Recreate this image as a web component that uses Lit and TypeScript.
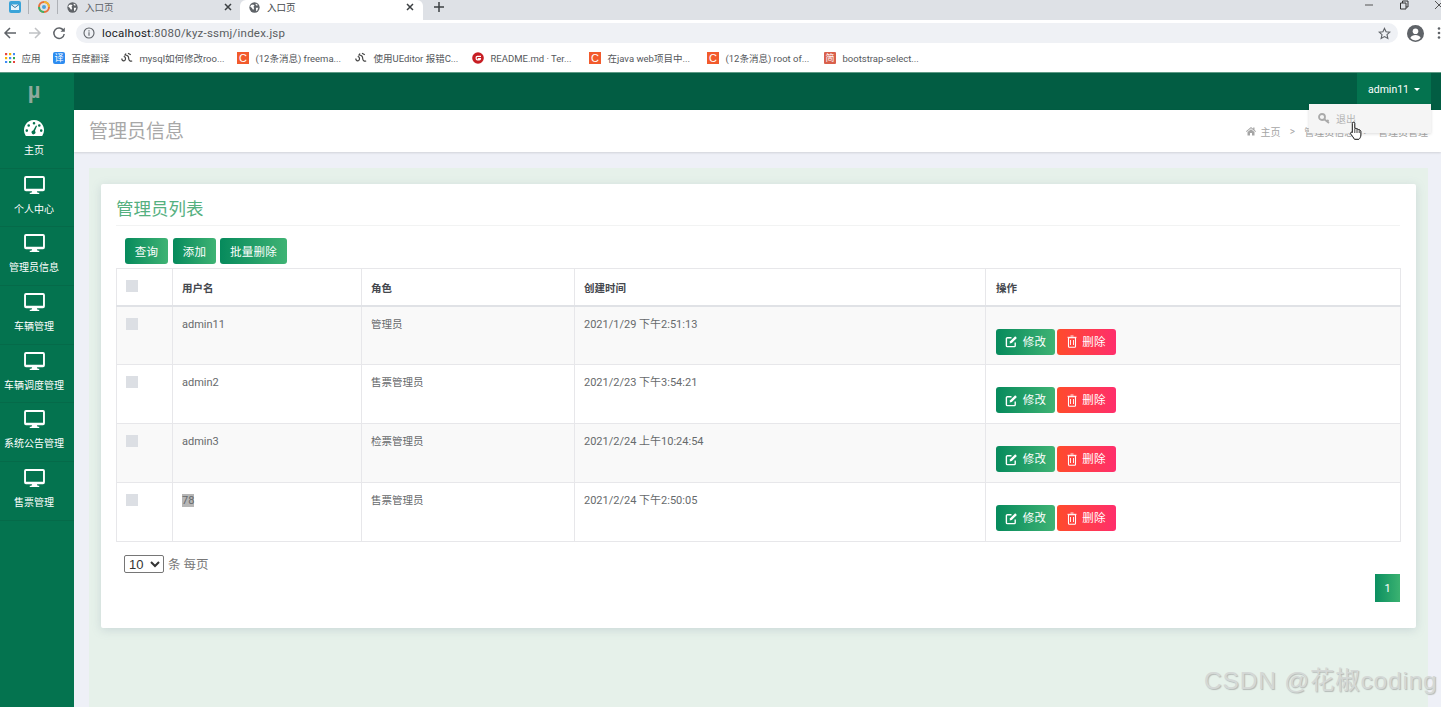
import { LitElement, html, css, svg } from "lit";
import { customElement } from "lit/decorators.js";

const globe = html`<svg class="tabicon" viewBox="0 0 16 16"><circle cx="8" cy="8" r="7.500" fill="#5f6368"/><path d="M3 4.500 6 3.500 8 5 6.500 7 7.500 9 6 11.500 4 8.500 1.800 7ZM10 2l3 2.500-1.500 1L9.500 4ZM10 8.500h3.500L12 12.500 10.500 13.500Z" fill="#fff"/></svg>`;
const closeX = html`<svg class="tabclose" viewBox="0 0 10 10"><path d="M2 2l6 6M8 2l-6 6" stroke="#3c4043" stroke-width="1.500"/></svg>`;
const monitor = html`<svg class="navicon" width="21" height="18" viewBox="0 0 22 19"><path fill="#fff" fill-rule="evenodd" d="M2 0h18a2 2 0 0 1 2 2v12a2 2 0 0 1-2 2h-6.500l.8 1.600H16V19H6v-1.400h1.700l.8-1.600H2a2 2 0 0 1-2-2V2a2 2 0 0 1 2-2Zm0 2v11.400h18V2Z"/></svg>`;
const gauge = html`<svg class="navicon g" width="20" height="16" viewBox="0 0 20 16"><path fill="#fff" fill-rule="evenodd" d="M10 0a10 10 0 0 1 8.800 14.800l-.6 1.200H1.800l-.6-1.200A10 10 0 0 1 10 0ZM10 2a1.300 1.300 0 1 0 0 2.600A1.300 1.300 0 0 0 10 2ZM4.700 4.200a1.300 1.300 0 1 0 0 2.600 1.300 1.300 0 0 0 0-2.600ZM15.300 4.200a1.300 1.300 0 1 0 0 2.600 1.300 1.300 0 0 0 0-2.600ZM2.800 9.300a1.300 1.300 0 1 0 0 2.600 1.300 1.300 0 0 0 0-2.600ZM17.200 9.300a1.300 1.300 0 1 0 0 2.600 1.300 1.300 0 0 0 0-2.600ZM12 5.500 9.200 10.500a1.900 1.900 0 1 0 1.700.6L13 5.900Z"/></svg>`;
const edit = html`<svg width="13" height="13" viewBox="0 0 14 14"><path d="M11 8v3.500a1 1 0 0 1-1 1H2.500a1 1 0 0 1-1-1V4a1 1 0 0 1 1-1H7" fill="none" stroke="#fff" stroke-width="1.500"/><path d="M5.500 6.800 11 1.300l1.800 1.800-5.500 5.500-2.300.5Z" fill="#fff"/></svg>`;
const trash = html`<svg width="10" height="13" viewBox="0 0 10 13"><path d="M1.500 2.800h7v8.700a.8.8 0 0 1-.8.800H2.300a.8.8 0 0 1-.8-.8Z" fill="none" stroke="#fff" stroke-width="1.100"/><path d="M.5 2.300h9M3.500 1h3M3.500 5v5M6.500 5v5" stroke="#fff" stroke-width=".9"/></svg>`;
const cIcon = html`<span class="bi ci">C</span>`;
const swirl = html`<svg class="bi" viewBox="0 0 12 12"><path d="M.8 6.500c0 3 3.700 3 3.700.3 0-1.800-1-2.300-1.800-2M5 1.500 4 3c2 0 3.700 1 3.700 3.500 0 2 1.500 3 3.500 2.500M7 1.200l2.800 1.600" fill="none" stroke="#444" stroke-width="1.200"/></svg>`;

const bookmarks = [
  { icon: html`<svg class="bi apps" viewBox="0 0 10 10">${[0, 4, 8].flatMap((y, r) => [0, 4, 8].map((x, c) => svg`<rect x=${x} y=${y} width="2.200" height="2.200" fill=${["#e8453c", "#f4b400", "#3d8af7", "#34a853"][(r + c) % 4]} />`))}</svg>`, text: "应用" },
  { icon: html`<span class="bi yi">译</span>`, text: "百度翻译" },
  { icon: swirl, text: "mysql如何修改roo..." },
  { icon: cIcon, text: "(12条消息) freema..." },
  { icon: swirl, text: "使用UEditor 报错C..." },
  { icon: html`<svg class="bi" viewBox="0 0 12 12"><circle cx="6" cy="6" r="5.800" fill="#c71d23"/><path d="M9 4.300H5.300a1.100 1.100 0 0 0-1.100 1.100v1.400a1.100 1.100 0 0 0 1.100 1.100h1.900a1.300 1.300 0 0 0 1.300-1.300H5.800" fill="none" stroke="#fff" stroke-width="1.200"/></svg>`, text: "README.md · Ter..." },
  { icon: cIcon, text: "在java web项目中..." },
  { icon: cIcon, text: "(12条消息) root of..." },
  { icon: html`<span class="bi jian">简</span>`, text: "bootstrap-select..." },
];

const nav = ["主页", "个人中心", "管理员信息", "车辆管理", "车辆调度管理", "系统公告管理", "售票管理"];
const rows = [
  ["admin11", "管理员", "2021/1/29 下午2:51:13"],
  ["admin2", "售票管理员", "2021/2/23 下午3:54:21"],
  ["admin3", "检票管理员", "2021/2/24 上午10:24:54"],
  ["78", "售票管理员", "2021/2/24 下午2:50:05"],
];

@customElement("app-root")
export class AppRoot extends LitElement {
  static styles = css`
    :host { display: block; width: 1441px; height: 707px; overflow: hidden; position: relative; background: #eef0f7;
      font-family: Roboto, "Noto Sans CJK SC", sans-serif; font-size: 11px; color: #676a6c; }
    * { box-sizing: border-box; }

    .tabs { height: 20px; background: #dee1e6; display: flex; align-items: flex-start; }
    .pin { width: 29px; height: 14px; display: flex; align-items: center; justify-content: center; position: relative; }
    .pin::after { content: ""; position: absolute; right: 0; top: 0; bottom: 0; width: 1px; background: #aeb1b6; }
    .tab { width: 181px; height: 20px; display: flex; align-items: center; padding: 0 6px 6px 9px; gap: 7px; color: #5f6368; font-size: 9.500px; margin-right: 1px; }
    .tab span { flex: 1; }
    .tab.active { background: #fff; border-radius: 6px 6px 0 0; color: #45484c; width: 183px; padding-right: 8px; }
    .tabicon { width: 11px; height: 11px; flex: none; }
    .tabclose { width: 10px; height: 10px; flex: none; }
    .plus { margin: 1px 0 0 9px; width: 12px; height: 12px; }
    .winctl { margin-left: auto; display: flex; align-items: center; height: 10px; gap: 25px; margin-right: -3px; }

    .toolbar { height: 24px; background: #fff; display: flex; align-items: center; padding: 2px 0 0 3px; }
    .toolbar .nb { flex: none; width: 24.500px; height: 14px; display: flex; }
    .toolbar .nb.r { width: 17px; }
    .pill { margin-left: 7px; width: 1322px; height: 20px; border-radius: 10px; background: #eff1f5; display: flex; align-items: center; padding: 0 7px; color: #5a5d61; font-size: 11.500px; gap: 7px; }
    .pill .url { flex: 1; letter-spacing: .02em; }
    .pill .url b { font-weight: 400; color: #202124; }
    .tools { display: flex; align-items: center; margin-left: 9px; gap: 13px; }

    .bm { height: 28px; background: #fff; display: grid; grid-template-columns: 48px 68px 116px 118px 117px 117px 118px 117px 120px; padding-left: 5px; align-items: center; font-size: 9.500px; color: #55585c; white-space: nowrap; }
    .bm > div { display: flex; align-items: center; gap: 6.500px; }
    .bi { width: 12px; height: 12px; flex: none; display: block; }
    .apps { width: 10px; height: 10px; }
    .ci { background: #f25a2c; color: #fff; font: 11px/12px "Liberation Sans", sans-serif; text-align: center; }
    .yi { background: #2d8cf0; color: #fff; border-radius: 2px; font-size: 9px; line-height: 12px; text-align: center; }
    .jian { background: #d9604c; color: #fff; border-radius: 1px; font-size: 9px; line-height: 12px; text-align: center; }

    .app { height: 635px; display: grid; grid-template-columns: 74px 1fr; grid-template-rows: 38px 1fr; }
    .logo { background: #04734f; border-top: 1px solid #5e9a85; color: #8fa99c; font: bold 22px/35px "Liberation Sans", sans-serif; text-align: center; padding-right: 6px; }
    .top { background: #025d43; border-top: 1px solid #5e9a85; display: flex; justify-content: flex-end; padding-right: 10px; }
    .user { width: 74px; background: #04734f; color: #fff; font-size: 10.500px; display: flex; align-items: center; justify-content: center; gap: 5px; padding-bottom: 4px; }
    .caret { width: 0; height: 0; border: 3px solid transparent; border-top-color: #fff; border-bottom: 0; }

    .side { background: #04734f; }
    .nav { height: 58.670px; border-bottom: 1px solid #056a49; display: flex; flex-direction: column; align-items: center; padding: 7px 6px 0 0; color: #fff; font-size: 10px; line-height: 14px; gap: 9px; white-space: nowrap; }
    .navicon { flex: none; }
    .navicon.g { margin: 3px 0 -1px; }

    .main { display: flex; flex-direction: column; min-width: 0; }
    .head { height: 42px; background: #fff; box-shadow: 0 1px 2px rgba(0,0,0,.12); display: flex; align-items: center; justify-content: space-between; padding: 0 13px 4px 15px; }
    .head h1 { margin: 0; font-size: 19px; font-weight: 400; color: #a8a8a8; }
    .crumb { display: flex; align-items: center; gap: 9.250px; color: #a5a5a5; font-size: 10px; padding-top: 4px; }
    .crumb .home { display: flex; align-items: center; gap: 5px; }
    .wrap { margin: 16px 13px 0 15px; padding: 16px 12px; background: #e6f1ea; flex: 1; }
    .card { background: #fff; height: 444px; padding: 15px 16px 0 15px; box-shadow: 0 2px 10px rgba(130,150,170,.28); border-radius: 2px; }
    .card h2 { margin: 0; height: 27px; font-size: 17.500px; font-weight: 400; line-height: 20px; color: #55b07f; border-bottom: 1px solid #f2f3f3; }
    .bar { display: flex; gap: 5px; padding: 12px 0 4px 9px; }
    .btn { border: 0; height: 26px; border-radius: 3px; color: #fff; font: inherit; font-size: 11.500px; padding: 0; display: inline-flex; align-items: center; justify-content: center; gap: 5px; background: linear-gradient(90deg, #068a5c, #3fb374); letter-spacing: .3px; }
    .bar .btn { width: 43px; }
    .bar .btn.wide { width: 67px; margin-left: -1px; }
    .btn.danger { background: linear-gradient(90deg, #ff4b2b, #ff2e6c); }

    table { border-collapse: collapse; table-layout: fixed; width: 1284px; }
    th, td { border: 1px solid #e7e7ea; padding: 0 9px; vertical-align: top; text-align: left; line-height: 14px; }
    th { height: 37px; color: #45484e; font-size: 10.500px; font-weight: 700; padding-top: 13px; border-bottom: 2px solid #e0e2e6; }
    td { height: 59px; padding-top: 11px; font-size: 10.500px; }
    td.name { font-size: 11px; }
    th:last-child, td:last-child { padding-left: 10px; }
    tbody tr:nth-child(odd) { background: #f9f9f9; }
    .chk { display: block; width: 12px; height: 12px; background: #dcdfe4; }
    th .chk { margin-top: -2px; }
    td .chk { margin-top: 0; }
    .ops { display: flex; gap: 2px; margin-top: 11px; }
    .ops .btn { width: 59px; }
    .sel { background: #b6b6b6; }

    .foot { display: flex; align-items: center; padding: 12px 0 0 8px; gap: 4px; font-size: 12.500px; color: #777; }
    select { width: 40px; height: 18px; font: 13px "Liberation Sans", sans-serif; color: #333; background: #fff; border: 1px solid #767676; border-radius: 2px; padding: 0; }
    .pager { display: flex; justify-content: flex-end; margin-top: 1px; }
    .page { width: 25px; height: 28px; color: #fff; font-size: 11px; display: flex; align-items: center; justify-content: center; background: linear-gradient(90deg, #0b8f60, #3bb271); }

    .drop { position: absolute; left: 1309px; top: 104px; width: 122px; height: 29px; background: #f5f5f5; box-shadow: 0 1px 3px rgba(0,0,0,.14); display: flex; align-items: center; padding-left: 9px; gap: 5px; color: #b3b3b3; font-size: 10px; }
    .hand { position: absolute; left: 1349px; top: 121px; }
    .mark { position: absolute; left: 1204px; top: 663px; font: 24.500px/36px "Liberation Sans", "Noto Sans CJK SC", sans-serif; letter-spacing: .8px; color: #d4d8d6; text-shadow: 1px 1px 1px #b5bab7; white-space: nowrap; }
  `;

  render() {
    return html`
      <div class="tabs">
        <div class="pin"><svg width="12" height="12" viewBox="0 0 12 12"><rect width="12" height="12" rx="2" fill="#3aa3d8"/><path d="M2 3.500h8v5.500H2Z" fill="#e8f4fa"/><path d="M2 3.500 6 6.500l4-3" fill="none" stroke="#3478a8" stroke-width="1"/></svg></div>
        <div class="pin"><svg width="12" height="12" viewBox="0 0 12 12"><circle cx="6" cy="6" r="5" fill="none" stroke="#e8703a" stroke-width="2"/><path d="M6 1a5 5 0 0 1 5 5" fill="none" stroke="#f2b632" stroke-width="2"/><path d="M1 6a5 5 0 0 0 5 5" fill="none" stroke="#3bb36a" stroke-width="2"/><circle cx="6" cy="6" r="2" fill="#4aa3df"/></svg></div>
        <div class="tab">${globe}<span>入口页</span>${closeX}</div>
        <div class="tab active">${globe}<span>入口页</span>${closeX}</div>
        <svg class="plus" viewBox="0 0 12 12"><path d="M6 1v10M1 6h10" stroke="#3c4043" stroke-width="1.500"/></svg>
        <div class="winctl">
          <svg width="10" height="10" viewBox="0 0 10 10"><path d="M1 5h8" stroke="#555" stroke-width="1"/></svg>
          <svg width="10" height="10" viewBox="0 0 10 10"><path d="M1.500 3h5.500v6H1.500ZM3.500 3V1h5.500v6H7" fill="none" stroke="#333" stroke-width="1"/></svg>
          <svg width="10" height="10" viewBox="0 0 10 10"><path d="M1 1l8 8M9 1l-8 8" stroke="#555" stroke-width="1"/></svg>
        </div>
      </div>
      <div class="toolbar">
        <div class="nb"><svg width="14" height="14" viewBox="0 0 14 14"><path d="M13 7H2M7 2 2 7l5 5" fill="none" stroke="#5f6368" stroke-width="1.500"/></svg></div>
        <div class="nb"><svg width="14" height="14" viewBox="0 0 14 14"><path d="M1 7h11M7 2l5 5-5 5" fill="none" stroke="#c0c2c5" stroke-width="1.500"/></svg></div>
        <div class="nb r"><svg width="14" height="14" viewBox="0 0 14 14"><path d="M11.500 4.500A5.200 5.200 0 1 0 12.200 8" fill="none" stroke="#5f6368" stroke-width="1.500"/><path d="M12.800 1.500v4.300H8.500Z" fill="#5f6368"/></svg></div>
        <div class="pill">
          <svg width="12" height="12" viewBox="0 0 12 12"><circle cx="6" cy="6" r="5" fill="none" stroke="#5f6368" stroke-width="1.100"/><path d="M6 5.300v3.400M6 3.200v1.200" stroke="#5f6368" stroke-width="1.100"/></svg>
          <span class="url"><b>localhost</b>:8080/kyz-ssmj/index.jsp</span>
          <svg width="13" height="13" viewBox="0 0 14 14"><path d="M7 1.500l1.700 3.700 4 .4-3 2.700.9 4L7 10.300l-3.600 2 .9-4-3-2.700 4-.4Z" fill="none" stroke="#5f6368" stroke-width="1.200"/></svg>
        </div>
        <div class="tools">
          <svg width="17" height="17" viewBox="0 0 17 17"><circle cx="8.500" cy="8.500" r="8.500" fill="#5f6368"/><circle cx="8.500" cy="6.300" r="2.800" fill="#fff"/><path d="M3.300 13c1-2.300 3-3 5.200-3s4.200.7 5.200 3a6.800 6.800 0 0 1-10.400 0Z" fill="#fff"/></svg>
          <svg width="4" height="14" viewBox="0 0 4 14"><circle cx="2" cy="2.500" r="1.300" fill="#5f6368"/><circle cx="2" cy="7" r="1.300" fill="#5f6368"/><circle cx="2" cy="11.500" r="1.300" fill="#5f6368"/></svg>
        </div>
      </div>
      <div class="bm">${bookmarks.map((b) => html`<div>${b.icon}<span>${b.text}</span></div>`)}</div>

      <div class="app">
        <div class="logo">µ</div>
        <div class="top"><div class="user">admin11 <i class="caret"></i></div></div>
        <aside class="side">
          ${nav.map((n, i) => html`<div class="nav">${i === 0 ? gauge : monitor}<span>${n}</span></div>`)}
        </aside>
        <main class="main">
          <div class="head">
            <h1>管理员信息</h1>
            <div class="crumb">
              <span class="home"><svg width="10" height="10" viewBox="0 0 10 10"><path d="M5 1 0 5.300l.6.700L5 2.300 9.400 6l.6-.7L8.500 4V1.500H7.200v1.300ZM1.500 6 5 3.200 8.500 6v3.500H6V7H4v2.500H1.500Z" fill="#a5a5a5"/></svg>主页</span>
              <span>&gt;</span><span>管理员信息</span><span>&gt;</span><span>管理员管理</span>
            </div>
          </div>
          <div class="wrap">
            <section class="card">
              <h2>管理员列表</h2>
              <div class="bar">
                <button class="btn">查询</button><button class="btn">添加</button><button class="btn wide">批量删除</button>
              </div>
              <table>
                <colgroup><col style="width:56px"/><col style="width:189px"/><col style="width:213px"/><col style="width:411px"/><col style="width:415px"/></colgroup>
                <thead><tr><th><i class="chk"></i></th><th>用户名</th><th>角色</th><th>创建时间</th><th>操作</th></tr></thead>
                <tbody>
                  ${rows.map((r) => html`<tr>
                    <td><i class="chk"></i></td>
                    <td class="name">${r[0] === "78" ? html`<span class="sel">78</span>` : r[0]}</td>
                    <td>${r[1]}</td>
                    <td class="name">${r[2]}</td>
                    <td><div class="ops"><button class="btn">${edit}修改</button><button class="btn danger">${trash}删除</button></div></td>
                  </tr>`)}
                </tbody>
              </table>
              <div class="foot"><select><option>10</option></select><span>条 每页</span></div>
              <div class="pager"><div class="page">1</div></div>
            </section>
          </div>
        </main>
      </div>

      <div class="drop">
        <svg width="13" height="11" viewBox="0 0 13 11"><circle cx="4" cy="4" r="3" fill="none" stroke="#aaa" stroke-width="1.800"/><path d="M6 6l5 4M9 8.500l1.500-1.500" stroke="#aaa" stroke-width="1.800"/></svg>
        <span>退出</span>
      </div>
      <svg class="hand" width="14" height="20" viewBox="0 0 13 20"><path d="M4 1.200c.8 0 1.300.5 1.300 1.300v5l1-.2c.7 0 1 .3 1.200.7.600-.2 1.200 0 1.500.5.700-.2 1.300.1 1.500.7.500.3.900.7.900 1.300v3.500c0 1.800-1 3.500-2 4.300H5c-.8-1.500-2.500-3.500-3.500-5C1 12.600.9 11.800 1.400 11.400c.5-.4 1.100-.2 1.400.3V2.500c0-.8.400-1.300 1.200-1.300Z" fill="#fff" stroke="#111" stroke-width="1"/><path d="M5.300 8v4M7.500 8v4M9.700 9v3" stroke="#111" stroke-width=".8"/></svg>
      <div class="mark">CSDN @花椒coding</div>
    `;
  }
}
